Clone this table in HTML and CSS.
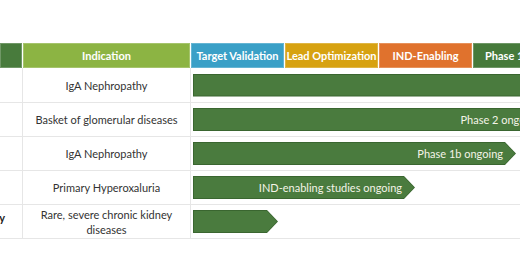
FILE: index.html
```html
<!DOCTYPE html>
<html>
<head>
<meta charset="utf-8">
<link rel="stylesheet" href="styles.css">
</head>
<body>
<div class="pipeline">
  <div class="head">
    <div class="hcell c-prog"></div>
    <div class="hcell c-ind">Indication</div>
    <div class="hcell c-tv">Target Validation</div>
    <div class="hcell c-lo">Lead Optimization</div>
    <div class="hcell c-ie">IND-Enabling</div>
    <div class="hcell c-p1">Phase 1</div>
  </div>
  <div class="row r1">
    <div class="prog"></div>
    <div class="ind">IgA Nephropathy</div>
    <div class="track"><div class="bar" style="width:420px"></div></div>
  </div>
  <div class="row r2">
    <div class="prog"></div>
    <div class="ind">Basket of glomerular diseases</div>
    <div class="track"><div class="bar" style="width:360px"><span>Phase 2 ongoing</span></div></div>
  </div>
  <div class="row r3">
    <div class="prog"></div>
    <div class="ind">IgA Nephropathy</div>
    <div class="track"><div class="bar" style="width:323px"><span>Phase 1b ongoing</span></div></div>
  </div>
  <div class="row r4">
    <div class="prog"></div>
    <div class="ind">Primary Hyperoxaluria</div>
    <div class="track"><div class="bar" style="width:222px"><span>IND-enabling studies ongoing</span></div></div>
  </div>
  <div class="row r5">
    <div class="prog">Discovery</div>
    <div class="ind">Rare, severe chronic kidney<br>diseases</div>
    <div class="track"><div class="bar" style="width:85px"></div></div>
  </div>
</div>
</body>
</html>
```

FILE: styles.css
```css
html, body {
  margin: 0;
  padding: 0;
  background: #ffffff;
  overflow: hidden;
}

body {
  width: 520px;
  height: 272px;
  font-family: Lato, "Open Sans", sans-serif;
}

.pipeline {
  width: 640px;
  padding-top: 43px;
}

.head {
  display: flex;
  gap: 1px;
  height: 25px;
}

.hcell {
  display: flex;
  align-items: center;
  justify-content: center;
  color: #ffffff;
  font-weight: bold;
  font-size: 11px;
  white-space: nowrap;
  box-shadow: inset 0 0 0 1px rgba(255, 255, 255, 0.22);
  flex: none;
}

.c-prog { width: 22px; background: #487b3c; }
.c-ind { width: 167px; background: #8cb443; }
.c-tv { width: 93px; background: #3aa0c7; }
.c-lo { width: 93px; background: #d7a211; }
.c-ie { width: 93px; background: #e0722d; }
.c-p1 { width: 120px; background: #467a3b; justify-content: flex-start; padding-left: 12px; }

.row {
  display: flex;
  height: 33px;
  border-bottom: 1px solid #e6e6e6;
}

.row.r1 { height: 34px; }

.prog {
  width: 23px;
  flex: none;
  overflow: hidden;
  display: flex;
  align-items: flex-start;
  justify-content: flex-end;
  padding-top: 6px;
  padding-right: 17px;
  box-sizing: border-box;
  font-weight: bold;
  font-size: 11px;
  color: #222;
  white-space: nowrap;
  border-right: 1px solid #e6e6e6;
}

.ind {
  width: 167px;
  flex: none;
  display: flex;
  align-items: center;
  justify-content: center;
  text-align: center;
  font-size: 11px;
  line-height: 15px;
  color: #333333;
  border-right: 1px solid #e6e6e6;
}

.track {
  flex: 1;
  display: flex;
  align-items: center;
  padding-left: 2px;
  overflow: hidden;
}

.bar {
  position: relative;
  height: 23px;
  flex: none;
  background: #3a6630;
  clip-path: polygon(0 0, calc(100% - 11px) 0, 100% 50%, calc(100% - 11px) 100%, 0 100%);
  display: flex;
  align-items: center;
  justify-content: flex-end;
  padding-right: 13px;
  box-sizing: border-box;
}

.bar::before {
  content: "";
  position: absolute;
  inset: 1px;
  background: #4a7b3e;
  clip-path: polygon(0 0, calc(100% - 10px) 0, 100% 50%, calc(100% - 10px) 100%, 0 100%);
}

.bar span {
  position: relative;
  color: #f4f4e8;
  font-size: 11px;
  white-space: nowrap;
}
```
